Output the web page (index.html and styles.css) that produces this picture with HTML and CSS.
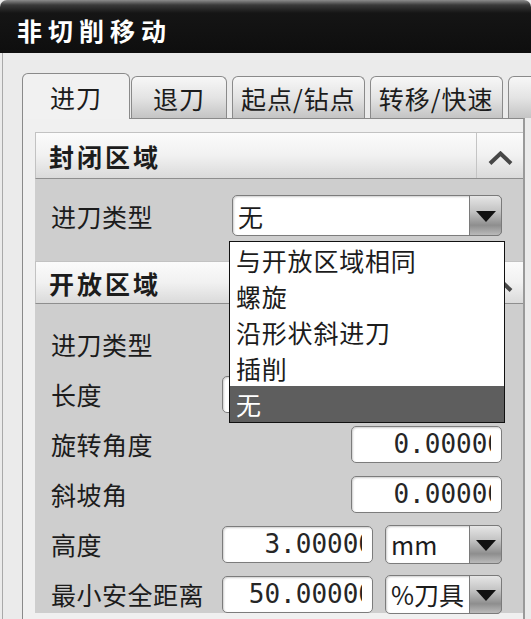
FILE: index.html
```html
<!DOCTYPE html>
<html lang="zh-CN">
<head>
  <meta charset="UTF-8" />
  <meta name="viewport" content="width=device-width, initial-scale=1.0"/>
  <title>非切削移动</title>
  <link rel="stylesheet" href="styles.css">
</head>
<body>
  <div class="dialog">
    <div class="title-bar">非切削移动</div>

    <div class="dialog-body">
      <div class="tabs">
        <div class="tab active">进刀</div>
        <div class="tab">退刀</div>
        <div class="tab">起点/钻点</div>
        <div class="tab">转移/快速</div>
        <div class="tab"></div>
      </div>

      <div class="tab-panel">
        <!-- closed area -->
        <div class="group">
          <div class="group-head">
            <span class="group-title">封闭区域</span>
            <span class="collapse">
              <svg width="25" height="14" viewBox="0 0 25 14"><polyline points="2,12.5 12.5,2.5 23,12.5" fill="none" stroke="#474747" stroke-width="4"/></svg>
            </span>
          </div>
          <div class="group-body first">
            <div class="row">
              <span class="label">进刀类型</span>
              <div class="select wide">
                <span class="select-text">无</span>
                <span class="select-btn"><i class="arrow"></i></span>
                <ul class="dropdown">
                  <li>与开放区域相同</li>
                  <li>螺旋</li>
                  <li>沿形状斜进刀</li>
                  <li>插削</li>
                  <li class="selected">无</li>
                </ul>
              </div>
            </div>
          </div>
        </div>

        <!-- open area -->
        <div class="group">
          <div class="group-head">
            <span class="group-title">开放区域</span>
            <span class="collapse">
              <svg width="25" height="14" viewBox="0 0 25 14"><polyline points="2,12.5 12.5,2.5 23,12.5" fill="none" stroke="#474747" stroke-width="4"/></svg>
            </span>
          </div>
          <div class="group-body">
            <!-- these two rows sit under the open list -->
            <div class="row">
              <span class="label">进刀类型</span>
              <div class="select wide">
                <span class="select-text"></span>
                <span class="select-btn"><i class="arrow"></i></span>
              </div>
            </div>
            <div class="row">
              <span class="label">长度</span>
              <div class="controls">
                <div class="field"><div class="field-clip"><span class="field-value"></span></div></div>
                <div class="select unit">
                  <span class="select-text"></span>
                  <span class="select-btn"><i class="arrow"></i></span>
                </div>
              </div>
            </div>
            <div class="row">
              <span class="label">旋转角度</span>
              <div class="field"><div class="field-clip"><span class="field-value">0.00000</span></div></div>
            </div>
            <div class="row">
              <span class="label">斜坡角</span>
              <div class="field"><div class="field-clip"><span class="field-value">0.00000</span></div></div>
            </div>
            <div class="row">
              <span class="label">高度</span>
              <div class="controls">
                <div class="field"><div class="field-clip"><span class="field-value">3.00000</span></div></div>
                <div class="select unit">
                  <span class="select-text">mm</span>
                  <span class="select-btn"><i class="arrow"></i></span>
                </div>
              </div>
            </div>
            <div class="row">
              <span class="label">最小安全距离</span>
              <div class="controls">
                <div class="field"><div class="field-clip"><span class="field-value">50.00000</span></div></div>
                <div class="select unit">
                  <span class="select-text">%刀具</span>
                  <span class="select-btn"><i class="arrow"></i></span>
                </div>
              </div>
            </div>
          </div>
        </div>
      </div>
    </div>
  </div>
</body>
</html>
```

FILE: styles.css
```css
* {
  box-sizing: border-box;
}

body {
  margin: 0;
  background-color: #ebebeb;
  font-family: "Noto Sans CJK SC", "Liberation Sans", sans-serif;
  color: #1c1c1c;
}

.dialog {
  width: 531px;
  height: 619px;
  overflow: hidden;
  background-color: #ebebeb;
}

.title-bar {
  height: 53px;
  padding: 7px 0 0 17px;
  display: flex;
  align-items: center;
  border-radius: 7px 7px 0 0;
  background: linear-gradient(#8c8c8c 0, #3a3a3a 5px, #151515 13px, #0e0e0e 100%);
  color: #ffffff;
  font-size: 25px;
  font-weight: bold;
  letter-spacing: 6px;
}

.dialog-body {
  height: 566px;
  margin-left: 2px;
  border-left: 1px solid #a9a9a9;
  padding: 20px 0 0 19px;
}

/* tabs */
.tabs {
  display: flex;
  align-items: flex-end;
  gap: 5px;
  height: 45px;
}

.tab {
  flex-shrink: 0;
  min-width: 96px;
  height: 42px;
  padding: 0 8px;
  display: flex;
  align-items: center;
  justify-content: center;
  border: 1px solid #8a8a8a;
  border-bottom: none;
  border-radius: 6px 6px 0 0;
  background: linear-gradient(#f7f7f7, #e4e4e4 50%, #c4c4c4);
  font-size: 25px;
  letter-spacing: 1px;
  white-space: nowrap;
}

.tab.active {
  position: relative;
  z-index: 1;
  min-width: 108px;
  height: 46px;
  margin-right: -4px;
  margin-bottom: -1px;
  background: #f1f1f1;
}

.tab-panel {
  height: 510px;
  margin-right: 6px;
  border: 1px solid #8a8a8a;
  border-right: 2px solid #9a9a9a;
  border-bottom: none;
  background-color: #f0f0f0;
  padding: 13px 0 0 12px;
}

/* collapsible groups */
.group-head {
  display: flex;
  align-items: center;
  height: 43px;
  padding-left: 13px;
  border: 1px solid #c2c2c2;
  border-bottom-color: #8e8e8e;
  border-right: none;
  background: linear-gradient(#fbfbfb, #f1f1f1 50%, #dadada);
}

.group:first-child .group-head {
  height: 47px;
}

.group-title {
  flex: 1;
  font-size: 25px;
  font-weight: bold;
  letter-spacing: 3px;
}

.collapse {
  align-self: stretch;
  width: 47px;
  display: flex;
  align-items: center;
  justify-content: center;
  padding-top: 4px;
  border-left: 1px solid #c4c4c4;
}

.group-body {
  display: flex;
  flex-direction: column;
  gap: 12px;
  padding: 21px 21px 0 16px;
  background-color: #cecece;
}

.group-body.first {
  padding: 16px 21px 25px 16px;
}

.row {
  display: flex;
  align-items: center;
  height: 38px;
}

.group-body.first .row {
  height: 41px;
}

.label {
  flex: 1;
  font-size: 25px;
  letter-spacing: 0.5px;
  white-space: nowrap;
}

.controls {
  display: flex;
  align-items: center;
  gap: 12px;
}

/* number fields */
.field {
  width: 151px;
  height: 37px;
  display: flex;
  padding-right: 10px;
  background-color: #ffffff;
  border: 1px solid #7c7c7c;
  border-radius: 5px;
  box-shadow: inset 1px 1px 2px rgba(0, 0, 0, 0.2);
}

.field-clip {
  flex: 1;
  display: flex;
  align-items: center;
  justify-content: flex-end;
  overflow: hidden;
}

.field-value {
  margin-right: -12px;
  font-family: "DejaVu Sans Mono", monospace;
  font-size: 26px;
  color: #262626;
  white-space: nowrap;
}

/* dropdown selects */
.select {
  position: relative;
  display: flex;
  height: 39px;
  background-color: #ffffff;
  border: 1px solid #7c7c7c;
  border-radius: 5px;
  box-shadow: inset 1px 1px 2px rgba(0, 0, 0, 0.2);
}

.select.wide {
  width: 270px;
}

.select.unit {
  width: 117px;
}

.group-body.first .select {
  height: 41px;
}

.select-text {
  flex: 1;
  display: flex;
  align-items: center;
  padding-left: 5px;
  font-size: 25px;
  white-space: nowrap;
}

.select-btn {
  width: 33px;
  margin: -1px -1px -1px 0;
  display: flex;
  align-items: center;
  justify-content: center;
  border: 1px solid #7a7a7a;
  border-radius: 0 5px 5px 0;
  background: linear-gradient(#e6e6e6, #c2c2c2 40%, #8e8e8e 75%, #bababa);
}

.arrow {
  width: 0;
  height: 0;
  margin-top: 2px;
  border-left: 10px solid transparent;
  border-right: 10px solid transparent;
  border-top: 11px solid #111111;
}

.dropdown {
  position: absolute;
  z-index: 5;
  left: -4px;
  top: 45px;
  width: 276px;
  margin: 0;
  padding: 0;
  list-style: none;
  background-color: #ffffff;
  border: 1px solid #111111;
}

.dropdown li {
  height: 36px;
  display: flex;
  align-items: center;
  padding-left: 6px;
  font-size: 25px;
  letter-spacing: 0.8px;
}

.dropdown li.selected {
  background-color: #5e5e5e;
  color: #ffffff;
}
```
